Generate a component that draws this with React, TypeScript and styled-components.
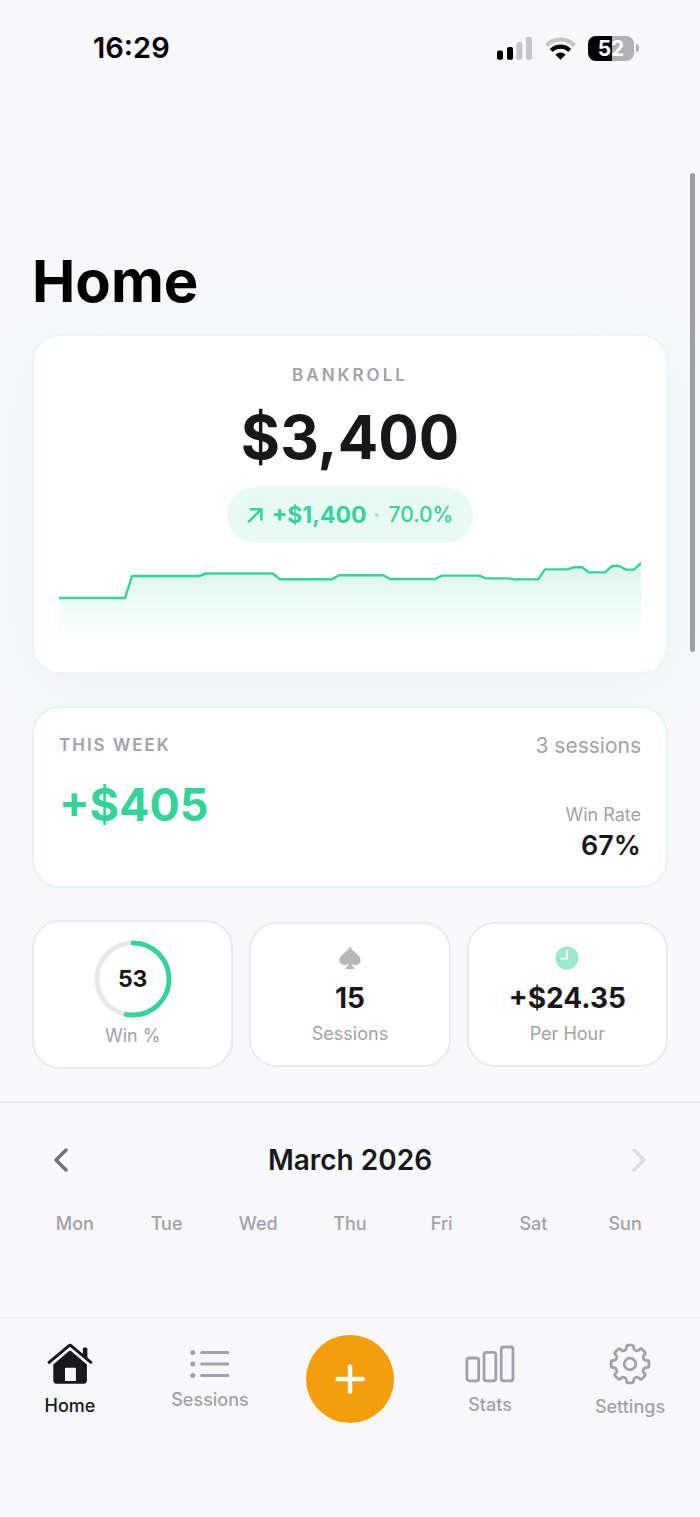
import React from "react";
import styled, { createGlobalStyle } from "styled-components";

const color = {
  page: "#f8f8fb",
  ink: "#18181b",
  muted: "#a1a1aa",
  green: "#34d399",
  line: "#eaeaec",
  orange: "#f59e0b",
};

const GlobalStyle = createGlobalStyle`
  *, *::before, *::after { box-sizing: border-box; }
  body {
    margin: 0;
    background: ${color.page};
    color: ${color.ink};
    font-family: Inter, "Liberation Sans", sans-serif;
  }
  h1, h2, p, dl, dd, dt, ul { margin: 0; padding: 0; }
  ul { list-style: none; }
  button { font: inherit; color: inherit; background: none; border: 0; padding: 0; cursor: pointer; }
  svg { display: block; }
`;

const Screen = styled.div`
  position: relative;
  display: flex;
  flex-direction: column;
  min-height: 100vh;
  overflow: hidden;
`;

const StatusBar = styled.header`
  display: flex;
  align-items: center;
  justify-content: space-between;
  height: 96px;
  padding: 0 61px 0 93px;
`;

const Clock = styled.time`
  font-size: 29px;
  line-height: 32px;
  font-weight: 600;
  color: #000;
`;

const StatusIcons = styled.div`
  display: flex;
  align-items: center;
  gap: 12px;
`;

const Battery = styled.div`
  display: flex;
  align-items: center;
  gap: 2px;
`;

const BatteryBody = styled.span<{ $level: number }>`
  width: 46px;
  height: 25px;
  border-radius: 8px;
  background: linear-gradient(to right, #000 ${(p) => p.$level}%, #b0b0b2 ${(p) => p.$level}%);
  color: #fff;
  font-size: 21px;
  line-height: 25px;
  font-weight: 700;
  text-align: center;
`;

const BatteryTip = styled.span`
  width: 3px;
  height: 8px;
  border-radius: 0 4px 4px 0;
  background: #b0b0b2;
`;

const ScrollThumb = styled.div`
  position: absolute;
  top: 173px;
  right: 5px;
  width: 5px;
  height: 479px;
  border-radius: 3px;
  background: #9d9ea0;
`;

const Content = styled.main`
  flex: 1;
  display: flex;
  flex-direction: column;
`;

const PageTitle = styled.h1`
  padding: 150px 32px 18px;
  font-size: 58px;
  line-height: 70px;
  font-weight: 700;
  color: #000;
`;

const Cards = styled.div`
  display: flex;
  flex-direction: column;
  gap: 32px;
  padding: 0 32px 32px;
`;

const Card = styled.section`
  background: #fff;
  border: 2px solid #e1f6ee;
  border-radius: 28px;
`;

const BankrollCard = styled(Card)`
  display: flex;
  flex-direction: column;
  align-items: center;
  padding: 27px 25px;
  border-color: #e8f8f2;
  box-shadow: 0 12px 72px rgba(52, 190, 150, 0.08);
`;

const Overline = styled.h2<{ $wide?: boolean }>`
  font-size: 17px;
  line-height: 24px;
  font-weight: 600;
  letter-spacing: ${(p) => (p.$wide ? "3px" : "2px")};
  color: ${color.muted};
  text-transform: uppercase;
`;

const Balance = styled.p`
  margin-top: 12px;
  font-size: 60px;
  line-height: 76px;
  font-weight: 700;
`;

const ChangePill = styled.p`
  display: flex;
  align-items: center;
  gap: 8px;
  height: 56px;
  margin-top: 12px;
  padding: 0 20px;
  border-radius: 28px;
  background: #e9faf4;
  color: ${color.green};
  font-size: 21px;
  line-height: 28px;
  font-weight: 500;
`;

const Gain = styled.strong`
  font-size: 23px;
  font-weight: 700;
`;

const Dot = styled.span`
  width: 4px;
  height: 4px;
  margin: 0 1px;
  border-radius: 50%;
  background: #a5e9cf;
`;

const ChartBox = styled.div`
  align-self: stretch;
  margin-top: 14px;
  svg { width: 100%; height: 88px; }
`;

const WeekCard = styled(Card)`
  display: grid;
  grid-template-columns: 1fr auto;
  padding: 25px 25px 21px;
`;

const SessionCount = styled.p`
  font-size: 21px;
  line-height: 26px;
  color: ${color.muted};
  text-align: right;
`;

const WeekGain = styled.p`
  padding-top: 18px;
  font-size: 45px;
  line-height: 56px;
  font-weight: 700;
  color: ${color.green};
`;

const WinRate = styled.dl`
  padding-top: 44px;
  text-align: right;
  dt { font-size: 18px; line-height: 24px; color: ${color.muted}; }
  dd { font-size: 27px; line-height: 38px; font-weight: 600; }
`;

const StatRow = styled.div`
  display: grid;
  grid-template-columns: repeat(3, 1fr);
  align-items: center;
  gap: 16px;
`;

const StatCard = styled(Card)<{ $ring?: boolean }>`
  display: flex;
  flex-direction: column;
  align-items: center;
  padding: ${(p) => (p.$ring ? "18px 0 17px" : "22px 0 17px")};
  border-color: ${color.line};
`;

const StatValue = styled.p`
  margin: 10px 0 4px;
  font-size: 28px;
  line-height: 36px;
  font-weight: 700;
`;

const StatLabel = styled.p`
  font-size: 18px;
  line-height: 28px;
  color: ${color.muted};
`;

const Ring = styled.div`
  display: grid;
  place-items: center;
  margin-bottom: 4px;
  > * { grid-area: 1 / 1; }
`;

const RingValue = styled.span`
  font-size: 23px;
  line-height: 28px;
  font-weight: 700;
`;

const Calendar = styled.section`
  border-top: 2px solid #e9e9ec;
  padding: 35px 29px 0;
`;

const MonthBar = styled.div`
  display: flex;
  align-items: center;
  justify-content: space-between;
  padding: 0 19px;
`;

const MonthName = styled.h2`
  font-size: 28px;
  line-height: 44px;
  font-weight: 600;
`;

const StepButton = styled.button`
  display: grid;
  place-items: center;
  width: 26px;
  height: 44px;
  color: #71717a;
  &:disabled { color: #dcdce0; cursor: default; }
`;

const Weekdays = styled.ul`
  display: grid;
  grid-template-columns: repeat(7, 1fr);
  margin-top: 29px;
  font-size: 18px;
  line-height: 26px;
  font-weight: 500;
  color: ${color.muted};
  text-align: center;
`;

const TabBar = styled.nav`
  display: grid;
  grid-template-columns: repeat(5, 1fr);
  align-items: center;
  justify-items: center;
  min-height: 200px;
  padding: 16px 0 94px;
  border-top: 2px solid #f3f3f6;
`;

const Tab = styled.button<{ $active?: boolean }>`
  display: flex;
  flex-direction: column;
  align-items: center;
  gap: 11px;
  padding-top: 2px;
  color: ${(p) => (p.$active ? color.ink : color.muted)};
  font-size: 18px;
  line-height: 22px;
  font-weight: 500;
`;

const AddButton = styled.button`
  display: grid;
  place-items: center;
  width: 88px;
  height: 88px;
  border-radius: 50%;
  background: ${color.orange};
  color: #fff;
`;

const SignalIcon = () => (
  <svg width="36" height="23" viewBox="0 0 36 23" aria-hidden="true">
    <rect x="0" y="13.6" width="6" height="9.2" rx="1.8" />
    <rect x="10" y="10" width="6" height="12.8" rx="1.8" />
    <rect x="19.4" y="5" width="6" height="17.8" rx="1.8" fill="#c6c6c8" />
    <rect x="29" y="0" width="6" height="22.8" rx="1.8" fill="#c6c6c8" />
  </svg>
);

const WifiIcon = () => (
  <svg width="31" height="23" viewBox="0 0 31 23" fill="none" strokeWidth="4.2" aria-hidden="true">
    <path d="M1.4 8.4A20.2 20.2 0 0 1 29.6 8.4" stroke="#c6c6c8" />
    <path d="M6.3 13.4A13 13 0 0 1 24.7 13.4" stroke="#000" />
    <path d="M15.5 22.8 10.4 17.7A7.2 7.2 0 0 1 20.6 17.7Z" fill="#000" />
  </svg>
);

const ArrowUpRight = () => (
  <svg width="17" height="17" viewBox="0 0 17 17" fill="none" stroke="currentColor" strokeWidth="2.6" strokeLinecap="round" strokeLinejoin="round" aria-hidden="true">
    <path d="M2 14.4 14.2 2.4M3.8 2.2H14.4V12.6" />
  </svg>
);

const balancePoints = [
  [0, 41], [66, 41], [73, 19], [140, 19], [147, 16.5], [214, 16.5], [221, 22.3], [273, 22.3],
  [280, 18.2], [324, 18.2], [331, 22], [376, 22], [383, 18.6], [420, 18.6], [427, 21.4], [449, 21.4],
  [456, 22.4], [479, 22.4], [486, 12.4], [508, 12.4], [516, 10.2], [523, 10.2], [530, 15.4], [546, 15.4],
  [553, 9], [560, 9], [567, 12.6], [575, 12.6], [582, 5.8],
];
const balanceLine = balancePoints.map((p) => p.join(",")).join(" ");

const BalanceChart = () => (
  <ChartBox>
    <svg viewBox="0 0 582 88" preserveAspectRatio="none" role="img" aria-label="Bankroll over time">
      <defs>
        <linearGradient id="balanceFill" gradientUnits="userSpaceOnUse" x1="0" y1="4" x2="0" y2="84">
          <stop offset="0" stopColor={color.green} stopOpacity="0.19" />
          <stop offset="1" stopColor={color.green} stopOpacity="0" />
        </linearGradient>
      </defs>
      <polygon points={`0,88 ${balanceLine} 582,88`} fill="url(#balanceFill)" />
      <polyline points={balanceLine} fill="none" stroke={color.green} strokeWidth="2.4" strokeLinejoin="round" vectorEffect="non-scaling-stroke" />
    </svg>
  </ChartBox>
);

const RING_LENGTH = 2 * Math.PI * 36;

const WinRing = ({ percent }: { percent: number }) => (
  <Ring>
    <svg width="78" height="78" viewBox="0 0 78 78" fill="none" strokeWidth="4.8" aria-hidden="true">
      <circle cx="39" cy="39" r="36" stroke="#e8e8e9" />
      <circle
        cx="39"
        cy="39"
        r="36"
        stroke={color.green}
        strokeLinecap="round"
        strokeDasharray={`${(RING_LENGTH * percent) / 100} ${RING_LENGTH}`}
        transform="rotate(-90 39 39)"
      />
    </svg>
    <RingValue>{percent}</RingValue>
  </Ring>
);

const SpadeIcon = () => (
  <svg width="22" height="24" viewBox="0 0 22 24" fill="#b7b7bc" aria-hidden="true">
    <path d="M11 1C10.4 1 10.1 1.6 9.6 2.4C7.4 6.2.4 9 .4 14.2C.4 17 2.4 18.9 5 18.9C7 18.9 8.5 18.4 9.6 17.4C9.5 19 8.6 20 7.2 21.2C6.2 22 6.4 23 7.4 23H14.6C15.6 23 15.8 22 14.8 21.2C13.4 20 12.5 19 12.4 17.4C13.5 18.4 15 18.9 17 18.9C19.6 18.9 21.6 17 21.6 14.2C21.6 9 14.6 6.2 12.4 2.4C11.9 1.6 11.6 1 11 1Z" />
  </svg>
);

const HourIcon = () => (
  <svg width="24" height="24" viewBox="0 0 24 24" fill="none" aria-hidden="true">
    <circle cx="12" cy="12" r="11.5" fill="#9ae9cc" />
    <path d="M12 5V12.6H6.2" stroke="#fff" strokeWidth="1.8" strokeLinecap="round" strokeLinejoin="round" />
  </svg>
);

const Chevron = ({ back }: { back?: boolean }) => (
  <svg width="14" height="24" viewBox="0 0 14 24" fill="none" stroke="currentColor" strokeWidth="3.4" strokeLinecap="round" strokeLinejoin="round" aria-hidden="true">
    <path d={back ? "M12 2 2 12 12 22" : "M2 2 12 12 2 22"} />
  </svg>
);

const HomeIcon = () => (
  <svg width="46" height="41" viewBox="0 0 46 41" aria-hidden="true">
    <path d="M2.1 19.4 21.8 2.8Q23 1.8 24.2 2.8L43.9 19.4" fill="none" stroke="currentColor" strokeWidth="2.9" strokeLinecap="round" />
    <path d="M35.8 11.5V6Q35.8 4.5 37.2 4.5H39Q40.4 4.5 40.4 6V15.4Z" fill="currentColor" />
    <path
      fill="currentColor"
      fillRule="evenodd"
      d="M22 8.1Q23 7.3 24 8.1L39.9 21.4V37.6Q39.9 40.7 36.8 40.7H9.4Q6.3 40.7 6.3 37.6V21.4ZM18.8 24.8Q18 24.8 18 25.6V37.9H28.9V25.6Q28.9 24.8 28.1 24.8Z"
    />
  </svg>
);

const ListIcon = () => (
  <svg width="40" height="28" viewBox="0 0 40 28" stroke="currentColor" strokeWidth="3" strokeLinecap="round" aria-hidden="true">
    {[2.6, 14, 25.4].map((y) => (
      <React.Fragment key={y}>
        <circle cx="2.8" cy={y} r="2.5" fill="currentColor" stroke="none" />
        <path d={`M11.6 ${y}H37.8`} />
      </React.Fragment>
    ))}
  </svg>
);

const BarsIcon = () => (
  <svg width="50" height="38" viewBox="0 0 50 38" fill="none" stroke="currentColor" strokeWidth="2.8" aria-hidden="true">
    <rect x="1.9" y="13" width="11.8" height="22.8" rx="2.4" />
    <rect x="19" y="7.4" width="11.8" height="28.4" rx="2.4" />
    <rect x="36.2" y="2" width="11.8" height="33.8" rx="2.4" />
  </svg>
);

/* Eight-toothed outline whose corners are rounded by quadratic curves. */
const gearPath = (() => {
  const at = (r: number, degrees: number) => {
    const a = (degrees * Math.PI) / 180;
    return [21 + r * Math.sin(a), 21 - r * Math.cos(a)];
  };
  const corners: number[][] = [];
  for (let tooth = 0; tooth < 360; tooth += 45) {
    corners.push(at(14.8, tooth - 15), at(19.2, tooth - 10), at(19.2, tooth + 10), at(14.8, tooth + 15));
  }
  const toward = (a: number[], b: number[], d: number) => {
    const len = Math.hypot(b[0] - a[0], b[1] - a[1]);
    return [a[0] + ((b[0] - a[0]) * d) / len, a[1] + ((b[1] - a[1]) * d) / len].map((n) => n.toFixed(2)).join(" ");
  };
  return (
    corners
      .map((c, i) => {
        const before = corners[(i + corners.length - 1) % corners.length];
        const after = corners[(i + 1) % corners.length];
        return `${i ? "L" : "M"}${toward(c, before, 1.5)}Q${c[0].toFixed(2)} ${c[1].toFixed(2)} ${toward(c, after, 1.5)}`;
      })
      .join("") + "Z"
  );
})();

const GearIcon = () => (
  <svg width="42" height="42" viewBox="0 0 42 42" fill="none" stroke="currentColor" strokeWidth="2.8" strokeLinejoin="round" aria-hidden="true">
    <path d={gearPath} />
    <circle cx="21" cy="21" r="5.8" />
  </svg>
);

const PlusIcon = () => (
  <svg width="32" height="32" viewBox="0 0 32 32" fill="none" stroke="currentColor" strokeWidth="4.4" strokeLinecap="round" aria-hidden="true">
    <path d="M16 3.4V28.6M3.4 16H28.6" />
  </svg>
);

const weekdays = ["Mon", "Tue", "Wed", "Thu", "Fri", "Sat", "Sun"];

export default function App() {
  return (
    <>
      <GlobalStyle />
      <Screen>
        <StatusBar>
          <Clock>16:29</Clock>
          <StatusIcons>
            <SignalIcon />
            <WifiIcon />
            <Battery>
              <BatteryBody $level={52}>52</BatteryBody>
              <BatteryTip />
            </Battery>
          </StatusIcons>
        </StatusBar>

        <Content>
          <PageTitle>Home</PageTitle>
          <Cards>
            <BankrollCard>
              <Overline $wide>Bankroll</Overline>
              <Balance>$3,400</Balance>
              <ChangePill>
                <ArrowUpRight />
                <Gain>+$1,400</Gain>
                <Dot />
                <span>70.0%</span>
              </ChangePill>
              <BalanceChart />
            </BankrollCard>

            <WeekCard>
              <Overline>This week</Overline>
              <SessionCount>3 sessions</SessionCount>
              <WeekGain>+$405</WeekGain>
              <WinRate>
                <dt>Win Rate</dt>
                <dd>67%</dd>
              </WinRate>
            </WeekCard>

            <StatRow>
              <StatCard $ring>
                <WinRing percent={53} />
                <StatLabel>Win %</StatLabel>
              </StatCard>
              <StatCard>
                <SpadeIcon />
                <StatValue>15</StatValue>
                <StatLabel>Sessions</StatLabel>
              </StatCard>
              <StatCard>
                <HourIcon />
                <StatValue>+$24.35</StatValue>
                <StatLabel>Per Hour</StatLabel>
              </StatCard>
            </StatRow>
          </Cards>

          <Calendar>
            <MonthBar>
              <StepButton aria-label="Previous month">
                <Chevron back />
              </StepButton>
              <MonthName>March 2026</MonthName>
              <StepButton aria-label="Next month" disabled>
                <Chevron />
              </StepButton>
            </MonthBar>
            <Weekdays>
              {weekdays.map((day) => (
                <li key={day}>{day}</li>
              ))}
            </Weekdays>
          </Calendar>
        </Content>

        <TabBar>
          <Tab $active aria-current="page">
            <HomeIcon />
            Home
          </Tab>
          <Tab>
            <ListIcon />
            Sessions
          </Tab>
          <AddButton aria-label="Add session">
            <PlusIcon />
          </AddButton>
          <Tab>
            <BarsIcon />
            Stats
          </Tab>
          <Tab>
            <GearIcon />
            Settings
          </Tab>
        </TabBar>
        <ScrollThumb />
      </Screen>
    </>
  );
}
